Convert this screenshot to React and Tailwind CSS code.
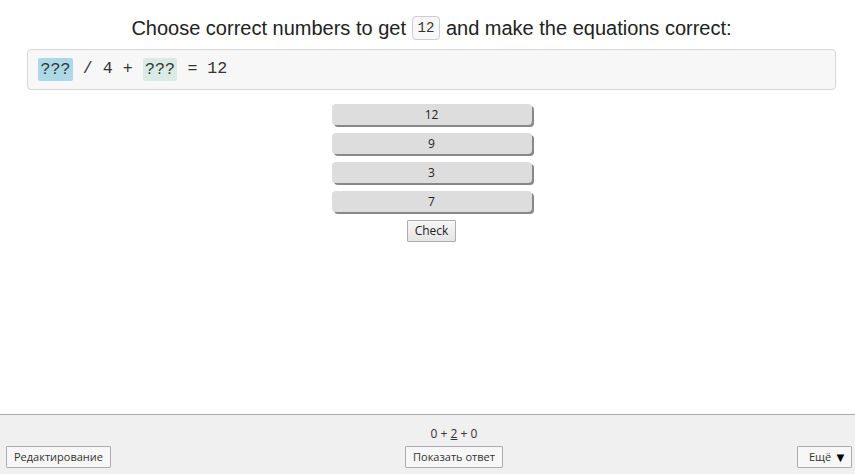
import React from "react";

const ui = { fontFamily: '"Open Sans", "Noto Sans", sans-serif' };
const mono = { fontFamily: '"Liberation Mono", "Courier New", monospace' };

export default function App() {
  const nums = ["12", "9", "3", "7"];
  return (
    <div className="min-h-[474px] h-[474px] flex flex-col bg-white text-[#222]">
      <div className="flex-1 flex flex-col items-center pl-[8px]">
        <div
          className="mt-[16px] text-[20px] leading-[24px] text-[#222] flex items-center"
          style={{ fontFamily: '"Liberation Sans", Arial, sans-serif' }}
        >
          <span>Choose correct numbers to get&nbsp;</span>
          <span
            className="inline-block border border-[#ccc] bg-[#f7f7f7] rounded-[4px] px-[5px] text-[14px] leading-[22px] text-[#333]"
            style={mono}
          >
            12
          </span>
          <span>&nbsp;and make the equations correct:</span>
        </div>
        <div
          className="mt-[9px] self-stretch mx-[19px] h-[41px] border border-[#d6d6d6] bg-[#f7f7f7] rounded-[4px] flex items-center pl-[10px] text-[16.6px] text-[#333]"
          style={mono}
        >
          <span className="bg-[#add8e6] rounded-[2px] px-[2.5px] leading-[23px]">???</span>
          <span className="whitespace-pre"> / 4 + </span>
          <span className="bg-[#d9ebe4] rounded-[2px] px-[2.5px] leading-[23px]">???</span>
          <span className="whitespace-pre"> = 12</span>
        </div>
        <div className="mt-[14px] flex flex-col gap-[8px] w-[200px]" style={ui}>
          {nums.map((n) => (
            <div
              key={n}
              className="h-[21px] bg-[#dddddd] rounded-[4px] shadow-[2px_2px_0_#888] flex items-center justify-center text-[12px] text-[#222]"
            >
              {n}
            </div>
          ))}
        </div>
        <button
          className="mt-[8px] h-[22px] px-[7px] border border-[#adadad] bg-[linear-gradient(#f6f6f6,#e5e5e5)] text-[12px] text-[#222] rounded-[1px]"
          style={ui}
        >
          Check
        </button>
      </div>
      <div
        className="h-[60px] border-t border-[#aaa] bg-[#f0f0f0] flex justify-between items-end pl-[6px] pr-[3px] pb-[6px]"
        style={ui}
      >
        <button className="h-[22px] px-[7px] border border-[#adadad] bg-[#f7f7f7] text-[11px] text-[#333] rounded-[1px]">
          Редактирование
        </button>
        <div className="flex flex-col items-center">
          <div className="text-[12px] text-[#333] leading-[16px] mb-[4px]">
            0 + <span className="underline">2</span> + 0
          </div>
          <button className="h-[22px] px-[7px] border border-[#adadad] bg-[#f7f7f7] text-[11px] text-[#333] rounded-[1px]">
            Показать ответ
          </button>
        </div>
        <button className="h-[22px] pl-[11px] pr-[4px] border border-[#adadad] bg-[#f7f7f7] text-[11px] text-[#333] rounded-[1px] flex items-center gap-[3px]">
          Ещё <span className="text-[13px] text-black leading-none">▼</span>
        </button>
      </div>
    </div>
  );
}
